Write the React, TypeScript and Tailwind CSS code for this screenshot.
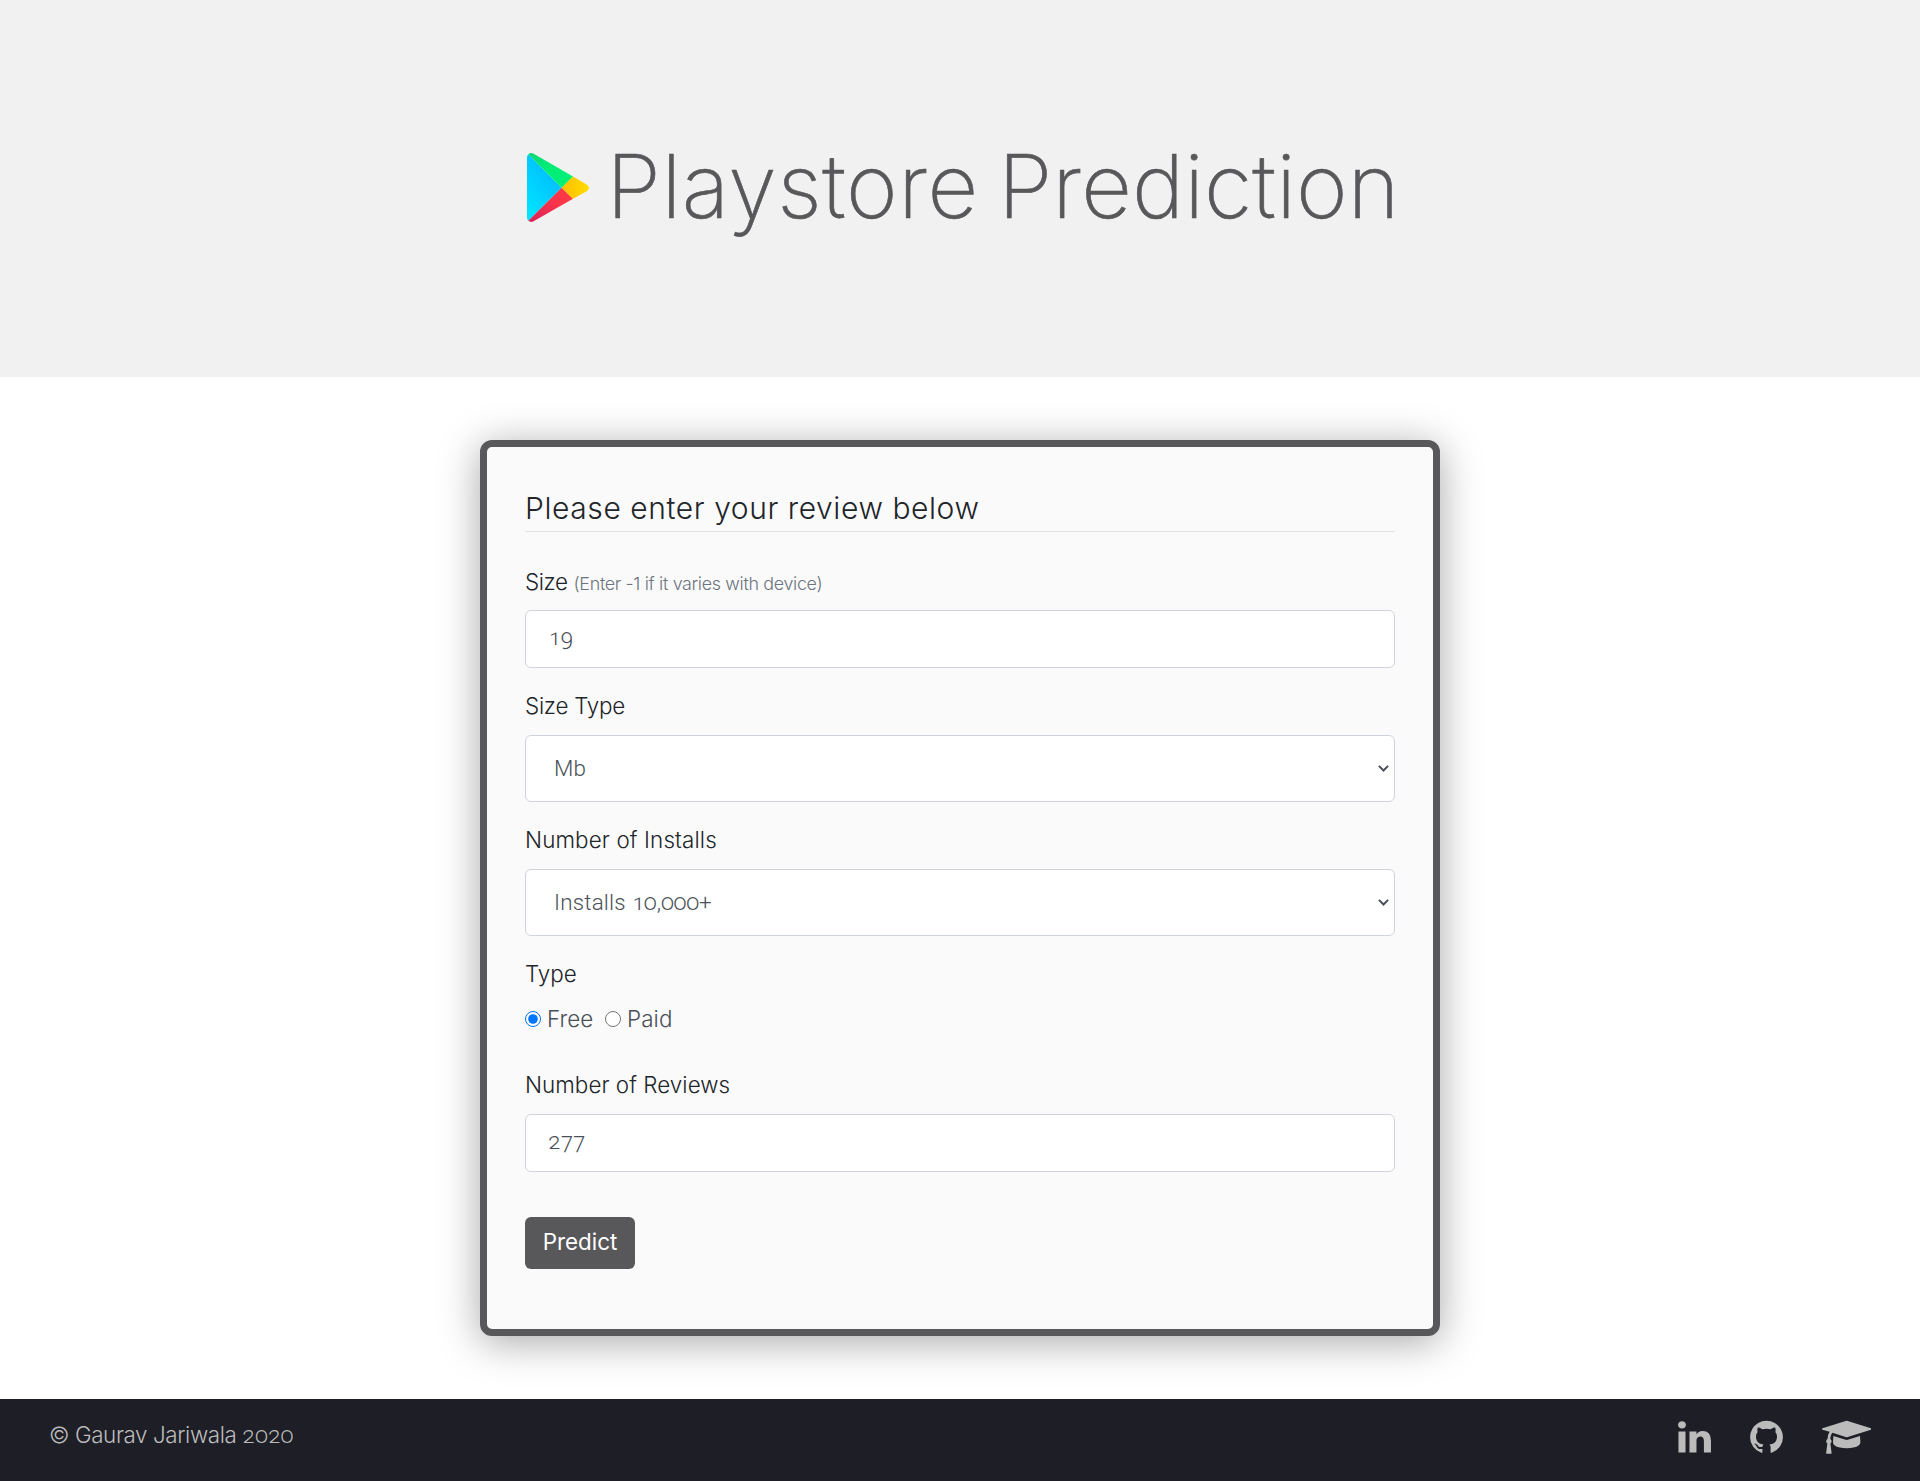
import React from 'react';

function PlayLogo() {
  return (
    <svg className="mb-[2px] h-[69px] w-[62px] shrink-0" viewBox="0 0 186 206">
      <defs>
        <linearGradient id="blue" x1="0.9" y1="0" x2="0.2" y2="1">
          <stop offset="0" stopColor="#00b4ff" />
          <stop offset="1" stopColor="#00e3ff" />
        </linearGradient>
        <linearGradient id="red" x1="1" y1="0" x2="0" y2="1">
          <stop offset="0" stopColor="#ff3a44" />
          <stop offset="0.4" stopColor="#fb3549" />
          <stop offset="1" stopColor="#d9225a" />
        </linearGradient>
        <linearGradient id="yellow" x1="1" y1="0" x2="0" y2="0">
          <stop offset="0" stopColor="#ffdc00" />
          <stop offset="1" stopColor="#ffbe00" />
        </linearGradient>
        <linearGradient id="green" x1="0" y1="0" x2="1" y2="1">
          <stop offset="0" stopColor="#0fd573" />
          <stop offset="0.45" stopColor="#00ee76" />
          <stop offset="1" stopColor="#00f076" />
        </linearGradient>
      </defs>
      <path fill="url(#blue)" d="M4 3Q0 7 0 13V193Q0 199 4 203L104 104Z" />
      <path fill="url(#green)" d="M4 3Q11 -3 20 2L138 70L104 104Z" />
      <path fill="url(#red)" d="M4 203Q11 209 20 204L138 137L104 104Z" />
      <path fill="url(#yellow)" d="M138 70L179 94Q193 104 179 114L138 137L104 104Z" />
    </svg>
  );
}

const LINKEDIN =
  'M477 625v991h-330v-991h330zm21-306q1 73-50.5 122t-135.5 49h-2q-82 0-132-49t-50-122q0-74 51.5-122.5t134.5-48.5 133 48.5 51 122.5zm1166 729v568h-329v-530q0-105-40.5-164.5t-126.5-59.5q-63 0-105.5 34.5t-63.5 85.5q-11 30-11 81v553h-329q2-399 2-647t-1-296l-1-48h329v144h-2q20-32 41-56t56.5-52 87-43.5 114.5-15.5q171 0 275 113.5t104 332.5z';
const GITHUB =
  'M896 128q209 0 385.5 103t279.5 279.5 103 385.5q0 251-146.5 451.5t-378.5 277.5q-27 5-40-7t-13-30q0-3 .5-76.5t.5-134.5q0-97-52-142 57-6 102.5-18t94-39 81-66.5 53-105 20.5-150.5q0-119-79-206 37-91-8-204-28-9-81 11t-92 44l-38 24q-93-26-192-26t-192 26q-16-11-42.5-27t-83.5-38.5-85-13.5q-45 113-8 204-79 87-79 206 0 85 20.5 150t52.5 105 80.5 67 94 39 102.5 18q-39 36-49 103-21 10-45 15t-57 5-65.5-21.5-55.5-62.5q-19-32-48.5-52t-49.5-24l-20-3q-21 0-29 4.5t-5 11.5 9 14 13 12l7 5q22 10 43.5 38t31.5 51l10 23q13 38 44 61.5t67 30 69.5 7 55.5-3.5l23-4q0 38 .5 88.5t.5 54.5q0 18-13 30t-40 7q-232-77-378.5-277.5t-146.5-451.5q0-209 103-385.5t279.5-279.5 385.5-103z';
const GRADUATION_CAP =
  'M1774 836l18 316q4 69-82 128t-235 93.5-323 34.5-323-34.5-235-93.5-82-128l18-316 574 181q22 7 48 7t48-7zm530-324q0 23-22 31l-1120 352q-4 1-10 1t-10-1l-652-206q-43 34-71 111.5t-34 178.5q63 36 63 109 0 69-58 107l58 433q2 14-8 25-9 11-24 11h-192q-15 0-24-11-10-11-8-25l58-433q-58-38-58-107 0-73 65-111 11-207 98-330l-333-104q-22-8-22-31t22-31l1120-352q4-1 10-1t10 1l1120 352q22 8 22 31z';

const labelClass = 'mb-3 block h-[34px] whitespace-nowrap text-[#212529]';
const inputClass =
  "block h-[58px] w-full rounded-md border border-[#ced4da] bg-white px-[22px] pb-[4px] font-['Roboto','Liberation_Sans',sans-serif] font-light text-[#495057] outline-none";

function Select({ value }: { value: string }) {
  return (
    <div className="relative">
      <select className="block h-[67px] w-full appearance-none rounded-md border border-[#ced4da] bg-white pt-px pl-[28px] font-['Roboto','Liberation_Sans',sans-serif] font-light tracking-[0.2px] text-[#495057] outline-none">
        <option>{value}</option>
      </select>
      <svg
        className="pointer-events-none absolute right-[6px] top-[30px] h-[7px] w-[11px]"
        viewBox="0 0 11 7"
        fill="none"
        stroke="#495057"
        strokeWidth="2"
      >
        <path d="M0.9 0.9L5.5 5.5L10.1 0.9" />
      </svg>
    </div>
  );
}

export default function App() {
  return (
    <div className="flex h-[1481px] w-full flex-col bg-white font-['Inter','Liberation_Sans',sans-serif] text-[22.4px] font-light oldstyle-nums">
      <header className="flex h-[377px] shrink-0 items-center justify-center bg-[#f1f1f1] pl-[7px]">
        <PlayLogo />
        <h1 className="flex gap-[19px] whitespace-nowrap pb-[5px] pl-[17px] text-[88px] font-extralight leading-none text-[#58585a] [-webkit-text-stroke:0.6px_#58585a]">
          <span className="tracking-[0.65px]">Playstore</span>
          <span className="tracking-[0.15px]">Prediction</span>
        </h1>
      </header>

      <main className="flex flex-1 justify-center pt-[63px]">
        <form
          className="h-[896px] w-[960px] rounded-xl border-[7px] border-[#58585a] bg-[#fafafa] px-[38px] pt-[41px] shadow-[0_6px_40px_rgba(0,0,0,0.35)]"
          onSubmit={(e) => e.preventDefault()}
        >
          <h2 className="mb-8 border-b border-[#dee2e6] pb-[3px] text-[30px] leading-[40px] tracking-[0.58px] text-[#212529]">
            Please enter your review below
          </h2>

          <label className={`leading-[35px] ${labelClass}`}>
            <span className="tracking-[-0.4px]">Size </span>
            <small className="text-[17.92px] tracking-[-0.34px] text-[#6c757d]">(Enter -1 if it varies with device)</small>
          </label>
          <input className={inputClass} defaultValue="19" />

          <label className={`mt-[21px] leading-[34px] tracking-[-0.25px] ${labelClass}`}>Size Type</label>
          <Select value="Mb" />

          <label className={`mt-[21px] leading-[34px] tracking-[0.13px] ${labelClass}`}>Number of Installs</label>
          <Select value="Installs 10,000+" />

          <label className="mt-[21px] block h-[34px] leading-[34px] text-[#212529]">Type</label>
          <div className="mt-[11px] flex h-[34px] items-center leading-[34px] tracking-[0.1px] text-[#495057]">
            <input type="radio" name="type" defaultChecked className="size-4" />
            <span className="ml-[6px] w-[58px]">Free</span>
            <input type="radio" name="type" className="size-4" />
            <span className="ml-[6px]">Paid</span>
          </div>

          <label className={`mt-8 leading-[34px] tracking-[0.05px] ${labelClass}`}>Number of Reviews</label>
          <input className={inputClass} defaultValue="277" />

          <button className="mt-[45px] h-[52px] w-[110px] rounded-md bg-[#58585a] pb-[2px] font-normal text-white">
            Predict
          </button>
        </form>
      </main>

      <footer className="flex h-[82px] shrink-0 justify-between bg-[#1d1e26] pl-[49px] pr-[49px] text-[#bbb]">
        <p className="pt-[19px] leading-[34px] tracking-[-0.4px]">
          © Gaurav Jariwala{' '}
          <span className="font-['Roboto','Liberation_Sans',sans-serif] tracking-[0.4px]">2020</span>
        </p>
        <div className="flex gap-[39px] pt-[19px]">
          <svg className="h-[38.4px] w-[33px]" viewBox="128 0 1536 1792" fill="currentColor">
            <path d={LINKEDIN} />
          </svg>
          <svg className="h-[38.4px] w-[33px]" viewBox="128 0 1536 1792" fill="currentColor">
            <path d={GITHUB} />
          </svg>
          <svg className="h-[38.4px] w-[49.4px]" viewBox="0 0 2304 1792" fill="currentColor">
            <path d={GRADUATION_CAP} />
          </svg>
        </div>
      </footer>
    </div>
  );
}
